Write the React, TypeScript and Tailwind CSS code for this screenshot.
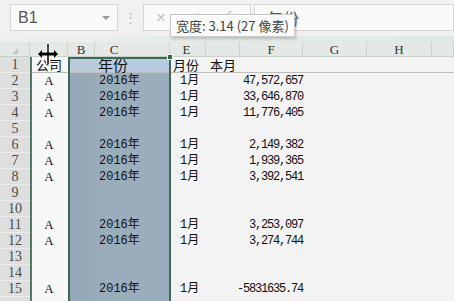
import React from 'react';

const cols = ['30px', '38px', '27px', '75px', '36px', '34px', '63px', '64px', '65px', '1fr'];

type Row = { n: number | string; a?: string; c?: string; e?: string; f?: string };

const rows: Row[] = [
  { n: 2, a: 'A', c: '2016年', e: '1月', f: '47,572,657' },
  { n: 3, a: 'A', c: '2016年', e: '1月', f: '33,646,870' },
  { n: 4, a: 'A', c: '2016年', e: '1月', f: '11,776,405' },
  { n: 5 },
  { n: 6, a: 'A', c: '2016年', e: '1月', f: '2,149,382' },
  { n: 7, a: 'A', c: '2016年', e: '1月', f: '1,939,365' },
  { n: 8, a: 'A', c: '2016年', e: '1月', f: '3,392,541' },
  { n: 9 },
  { n: 10 },
  { n: 11, a: 'A', c: '2016年', e: '1月', f: '3,253,097' },
  { n: 12, a: 'A', c: '2016年', e: '1月', f: '3,274,744' },
  { n: 13 },
  { n: 14 },
  { n: 15, a: 'A', c: '2016年', e: '1月', f: '-5831635.74' },
  { n: '' },
];

const mono = "font-['Liberation_Mono','Noto_Sans_CJK_SC',monospace]";
const cjk = "font-['Noto_Sans_CJK_SC',sans-serif]";

const RowHead = ({ n }: { n: number | string }) => (
  <div className="h-[16px] bg-[#dedede] border-b border-[#ececec] text-[#4a4a4a] text-[14px] leading-[16px] text-center font-['Liberation_Serif',serif]">
    {n}
  </div>
);

const ResizeCursor = () => (
  <svg width="22" height="22" viewBox="0 0 22 22" className="absolute left-[37px] top-[43px]">
    <path d="M11 1v20" stroke="#fff" strokeWidth="4" />
    <path d="M2 11h18" stroke="#fff" strokeWidth="5" />
    <path d="M11 1v20" stroke="#000" strokeWidth="1.5" />
    <path d="M3 11h16" stroke="#000" strokeWidth="3" />
    <path d="M1 11l4-4v8z M21 11l-4-4v8z" fill="#000" />
  </svg>
);

export default function App() {
  return (
    <div className="relative w-[454px] h-[301px] overflow-hidden bg-[#f3f3f3] font-['Liberation_Sans',sans-serif]">
      {/* formula bar */}
      <div className="h-[36px] flex items-start pt-[4px] bg-[#f1f1f1]">
        <div className="ml-[10px] w-[108px] h-[27px] bg-[#fafafa] border border-[#d6d6d6] flex items-center px-[7px] justify-between">
          <span className="text-[16px] text-[#555]">B1</span>
          <span className="w-0 h-0 border-l-[4px] border-r-[4px] border-t-[4px] border-l-transparent border-r-transparent border-t-[#999]" />
        </div>
        <div className="w-[25px] h-[27px] flex items-center justify-center text-[#bbb] text-[13px]">⋮</div>
        <div className="w-[108px] h-[27px] bg-[#fafafa] border border-[#d6d6d6] flex items-center px-[12px] gap-[24px] text-[#c4c4c4]">
          <span className="text-[17px]">×</span>
          <span className="text-[14px]">✓</span>
          <span className="text-[14px] italic font-['Liberation_Serif',serif] text-[#aaa]">f</span>
        </div>
        <div className="ml-[3px] flex-1 h-[27px] bg-[#fafafa] border border-[#d6d6d6] flex items-center pl-[12px]">
          <span className={`${cjk} text-[16px] text-[#555]`}>年份</span>
        </div>
      </div>

      {/* ghost band */}
      <div className="h-[6px] bg-gradient-to-r from-[#eef0ef] via-[#e4ece7] to-[#dceae1]" />

      {/* column header */}
      <div className="grid h-[15px] bg-[#e4e9e6] border-b border-[#c9cfcb]" style={{ gridTemplateColumns: cols.join(' ') }}>
        {['', '', 'B', 'C', 'E', '', 'F', 'G', 'H', ''].map((l, i) => (
          <div
            key={i}
            className={`border-r border-[#cdd3cf] text-[13px] leading-[15px] text-[#333] font-['Liberation_Serif',serif] text-center ${i === 3 ? 'pr-[36px]' : ''} ${i === 4 ? 'pr-[2px]' : ''}`}
          >
            {i === 0 ? (
              <span className="inline-block mt-[6px] w-0 h-0" style={{ borderBottom: '6px solid #c4c4c4', borderLeft: '6px solid transparent' }} />
            ) : (
              l
            )}
          </div>
        ))}
      </div>

      {/* sheet */}
      <div className="grid" style={{ gridTemplateColumns: cols.join(' ') }}>
        {/* row 1 */}
        <RowHead n={1} />
        <div className={`h-[16px] bg-[#f7f7f7] border-b border-[#bdbdbd] ${cjk} text-[13px] leading-[16px] text-center text-[#111]`}>公司</div>
        <div className="h-[16px] bg-[#b9cadb] border-b border-[#bdbdbd]" />
        <div className={`h-[16px] bg-[#b7cce2] border-b border-[#bdbdbd] ${cjk} text-[15px] leading-[16px] pl-[3px] text-[#111]`}>年份</div>
        <div className={`h-[16px] border-b border-[#bdbdbd] ${cjk} text-[13px] leading-[16px] pl-[3px] text-[#111]`}>月份</div>
        <div className={`h-[16px] border-b border-[#bdbdbd] ${cjk} text-[13px] leading-[16px] pl-[4px] text-[#111]`}>本月</div>
        <div className="h-[16px] border-b border-[#bdbdbd]" />
        <div className="h-[16px] border-b border-[#bdbdbd]" />
        <div className="h-[16px] border-b border-[#bdbdbd]" />
        <div className="h-[16px] border-b border-[#bdbdbd]" />

        {rows.map((r, idx) => (
          <React.Fragment key={idx}>
            <RowHead n={r.n} />
            <div className="h-[16px] bg-[#f7f7f7] text-center text-[13px] leading-[16px] text-[#111] font-['Liberation_Serif',serif]">{r.a}</div>
            <div className="h-[16px] bg-[#95a8b6]" />
            <div className={`h-[16px] bg-[#9aadbb] pl-[4px] text-[12px] leading-[16px] text-[#111] ${mono}`}>{r.c}</div>
            <div className={`h-[16px] pl-[10px] text-[12px] leading-[16px] text-[#111] ${mono}`}>{r.e}</div>
            <div className={`h-[16px] col-span-2 text-right pr-0 text-[12px] leading-[16px] tracking-[-1.2px] text-[#111] ${mono}`}>{r.f}</div>
            <div className="h-[16px]" />
            <div className="h-[16px]" />
            <div className="h-[16px]" />
          </React.Fragment>
        ))}
      </div>

      {/* selection border */}
      <div className="absolute left-[68px] top-[57px] w-[103px] h-[260px] border-2 border-[#3a6a50]" />
      <div className="absolute left-[30px] top-[57px] w-[2px] h-[260px] bg-[#4f7a63]" />
      <div className="absolute left-[167px] top-[54px] w-[6px] h-[6px] bg-[#2f6447] border border-[#f3f3f3]" />

      {/* tooltip */}
      <div className={`absolute left-[170px] top-[14px] h-[23px] px-[5px] flex items-center bg-[#fbfbfb] border border-[#c9c9c9] shadow-[1px_2px_3px_rgba(0,0,0,0.2)] text-[13px] text-[#444] ${cjk}`}>
        宽度: 3.14 (27 像素)
      </div>

      <ResizeCursor />
    </div>
  );
}
